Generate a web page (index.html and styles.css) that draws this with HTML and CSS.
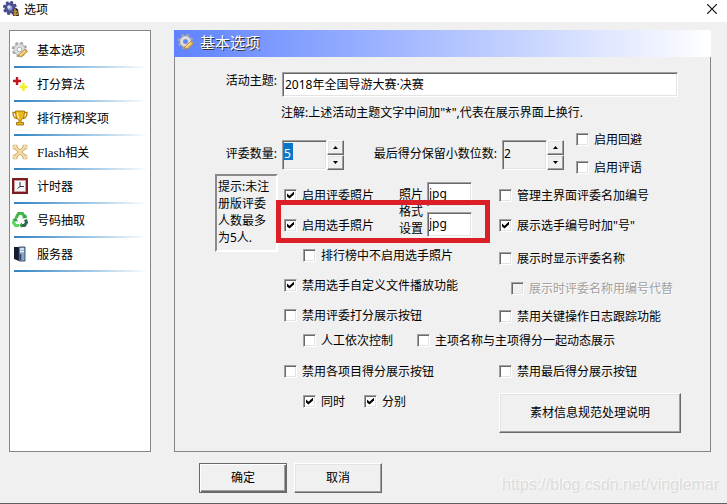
FILE: index.html
```html
<!DOCTYPE html>
<html lang="zh-CN">
  <head>
    <meta charset="utf-8" />
    <title>选项</title>
    <meta name="viewport" content="width=device-width, initial-scale=1" />
    <link rel="stylesheet" href="styles.css">
  </head>
  <body>
    <svg class="defs" width="0" height="0" aria-hidden="true">
      <symbol id="icon-gear" viewBox="0 0 16 16">
        <circle cx="7.5" cy="7.5" r="6.2" fill="none" stroke="#a4a7ad" stroke-width="3" stroke-dasharray="2.6 2.270" />
        <circle cx="7.5" cy="7.5" r="4" fill="none" stroke="#9a9da4" stroke-width="4" />
        <circle cx="7.5" cy="7.5" r="4" fill="none" stroke="#dcdde0" stroke-width="2.8" />
        <path d="M6 13.5l6.500-6 3 2-6.500 5.700z" fill="#f0bf5c" stroke="#a97728" stroke-width=".7" />
        <path d="M8 13l5-4.400" stroke="#ffe6a4" />
      </symbol>
    </svg>

    <header class="titlebar">
      <svg class="icon" viewBox="0 0 16 16">
        <circle cx="7" cy="7" r="5.800" fill="none" stroke="#3c4178" stroke-width="2.400" stroke-dasharray="2.700 1.800" />
        <circle cx="7" cy="7" r="4" fill="#8990c8" stroke="#4a5090" stroke-width="3" />
        <circle cx="6" cy="6" r="1.800" fill="#d8dcf5" />
        <path d="M10 8h5l1 7h-6z" fill="#41321c" />
        <path d="M12 8v7M10.500 10.500h4M10.500 13h4.500" stroke="#c99a3c" stroke-width="1.300" />
      </svg>
      <h1>选项</h1>
      <button class="close" aria-label="关闭">
        <svg viewBox="0 0 10 10"><path d="M0 0L10 10M10 0L0 10" stroke="#111" stroke-width="1.200" fill="none" /></svg>
      </button>
    </header>

    <form class="dialog">
      <div class="columns">
        <nav class="sidebar">
          <a href="#basic">
            <svg class="icon"><use href="#icon-gear" /></svg>
            基本选项
          </a>
          <a href="#score">
            <svg class="icon" viewBox="0 0 16 16">
              <path d="M5 1v8M1 5h8" stroke="#c3161c" stroke-width="2.400" />
              <path d="M11.500 7v8M7.500 11h8" stroke="#f4ee2a" stroke-width="2.400" />
            </svg>
            打分算法
          </a>
          <a href="#rank">
            <svg class="icon" viewBox="0 0 16 16">
              <path d="M4 2.500H1c0 4 1.500 5.500 4 6M12 2.500h3c0 4-1.500 5.500-4 6" fill="none" stroke="#b88408" stroke-width="1.400" />
              <path d="M3.500 1h9c0 5-1 8-3.500 9v2.500h2.500V15h-7v-2.500H7V10C4.500 9 3.500 6 3.500 1z" fill="#edb71b" stroke="#976500" stroke-width=".8" />
              <path d="M5.500 2.500c0 3 .5 5 1.500 6" fill="none" stroke="#fff0a0" stroke-width="1.300" />
            </svg>
            排行榜和奖项
          </a>
          <a href="#flash">
            <svg class="icon" viewBox="0 0 16 16">
              <path d="M3 3l10 10M13 3L3 13" stroke="#c9a55c" stroke-width="3.600" />
              <g fill="#efd193" stroke="#c49e58" stroke-width=".8">
                <circle cx="3" cy="3" r="2.300" /><circle cx="13" cy="3" r="2.300" />
                <circle cx="3" cy="13" r="2.300" /><circle cx="13" cy="13" r="2.300" />
              </g>
              <path d="M3 3l10 10M13 3L3 13" stroke="#f4dca6" stroke-width="2.200" />
              <path d="M0 3h2M3 0v2M14 3h2M13 0v2M0 13h2M3 14v2M14 13h2M13 14v2" stroke="#fff" />
            </svg>
            <span><span class="latin">Flash</span>相关</span>
          </a>
          <a href="#timer">
            <svg class="icon" viewBox="0 0 16 16">
              <rect x="1" y="1" width="14" height="14" fill="#f5f7f8" stroke="#7a1c22" stroke-width="2" />
              <rect x="2.500" y="2.500" width="11" height="11" fill="none" stroke="#c99a9c" />
              <path d="M8 4v4.500h4M8 8.500l-2.500 2" fill="none" stroke="#333c46" />
            </svg>
            计时器
          </a>
          <a href="#draw">
            <svg class="icon" viewBox="0 0 16 16">
              <path d="M4 6l2.500-4.500h4L12.500 5" fill="none" stroke="#45b649" stroke-width="3" />
              <path d="M13.500 7.500l1 3-2 3H9" fill="none" stroke="#2b6c4a" stroke-width="3" />
              <path d="M7 13.500H3.500l-2-3L3 7.500" fill="none" stroke="#5fd35d" stroke-width="3" />
              <path d="M10 6.500l5-.5-1-4zM10 10.500v5.500l-3-2.700zM0 8l4-2.500 2 4z" fill="#36a344" />
            </svg>
            号码抽取
          </a>
          <a href="#server">
            <svg class="icon" viewBox="0 0 16 16">
              <path d="M2 1h5v14l-5-2z" fill="#151c30" />
              <path d="M7 1h6v14H7z" fill="#8ba5c6" stroke="#26364f" stroke-width=".8" />
              <path d="M8 3h4M8 5.500h4" stroke="#e7f2ff" stroke-width="1.300" />
              <path d="M8.500 8v6" stroke="#2e466c" stroke-width="1.600" />
            </svg>
            服务器
          </a>
        </nav>

        <main class="panel">
          <h2><svg class="icon"><use href="#icon-gear" /></svg>基本选项</h2>

          <div class="panel-body">
            <div class="topic">
              <label class="caption" for="topic">活动主题:</label>
              <input class="text sunken" id="topic" type="text" value="2018年全国导游大赛·决赛" />
            </div>
            <p class="note">注解:上述活动主题文字中间加"*",代表在展示界面上换行.</p>

            <div class="counts">
              <label class="caption" for="judges">评委数量:</label>
              <div class="spinner">
                <input class="sunken selected" id="judges" type="text" value="5" />
                <div class="arrows">
                  <button type="button" aria-label="增加"><i class="up"></i></button>
                  <button type="button" aria-label="减少"><i class="down"></i></button>
                </div>
              </div>
              <label class="caption decimals" for="decimals">最后得分保留小数位数:</label>
              <div class="spinner">
                <input class="sunken" id="decimals" type="text" value="2" />
                <div class="arrows">
                  <button type="button" aria-label="增加"><i class="up"></i></button>
                  <button type="button" aria-label="减少"><i class="down"></i></button>
                </div>
              </div>
              <div class="extras">
                <label class="check"><input type="checkbox" />启用回避</label>
                <label class="check"><input type="checkbox" />启用评语</label>
              </div>
            </div>

            <div class="settings">
              <p class="hint">提示:未注册版评委人数最多为5人.</p>

              <div class="left">
                <div class="photos">
                  <div>
                    <label class="check"><input type="checkbox" checked />启用评委照片</label>
                    <label class="check"><input type="checkbox" checked />启用选手照片</label>
                  </div>
                  <p class="format">照片格式设置</p>
                  <div class="formats">
                    <input class="text sunken" type="text" value="jpg" aria-label="评委照片格式" />
                    <input class="text sunken" type="text" value="jpg" aria-label="选手照片格式" />
                  </div>
                  <div class="highlight"></div>
                </div>
                <label class="check sub"><input type="checkbox" />排行榜中不启用选手照片</label>
                <label class="check"><input type="checkbox" checked />禁用选手自定义文件播放功能</label>
                <label class="check"><input type="checkbox" />禁用评委打分展示按钮</label>
                <div class="sub pair modes">
                  <label class="check"><input type="checkbox" />人工依次控制</label>
                  <label class="check"><input type="checkbox" />主项名称与主项得分一起动态展示</label>
                </div>
                <label class="check"><input type="checkbox" />禁用各项目得分展示按钮</label>
                <div class="sub pair">
                  <label class="check"><input type="checkbox" checked />同时</label>
                  <label class="check"><input type="checkbox" checked />分别</label>
                </div>
              </div>

              <div class="right">
                <label class="check"><input type="checkbox" />管理主界面评委名加编号</label>
                <label class="check"><input type="checkbox" checked />展示选手编号时加"号"</label>
                <div class="names">
                  <label class="check"><input type="checkbox" />展示时显示评委名称</label>
                  <label class="check disabled"><input type="checkbox" disabled />展示时评委名称用编号代替</label>
                </div>
                <label class="check log"><input type="checkbox" />禁用关键操作日志跟踪功能</label>
                <label class="check"><input type="checkbox" />禁用最后得分展示按钮</label>
                <button class="btn wide" type="button">素材信息规范处理说明</button>
              </div>
            </div>
          </div>
        </main>
      </div>

      <footer class="actions">
        <button class="btn default" type="button">确定</button>
        <button class="btn" type="button">取消</button>
        <span class="watermark">https://blog.csdn.net/vinglemar</span>
      </footer>
    </form>
  </body>
</html>
```
FILE: styles.css
```css
* {
  box-sizing: border-box;
}
body {
  display: flex;
  flex-direction: column;
  min-height: 100vh;
  margin: 0;
  background: #f0f0f0;
  border-bottom: 1px solid #606060;
  color: #000;
  font: 12px/17px 'Noto Sans', 'Noto Sans CJK SC', sans-serif;
}
h1,
h2,
p {
  margin: 0;
  font-weight: normal;
}
input,
button {
  margin: 0;
  font: inherit;
  color: inherit;
}
.defs {
  position: absolute;
}
.icon {
  flex: none;
  width: 16px;
  height: 16px;
}

/* title bar */
.titlebar {
  display: flex;
  align-items: center;
  gap: 5px;
  height: 22px;
  padding: 0 10px 4px 3px;
  background: #fff;
}
.titlebar h1 {
  flex: 1;
  font-size: 12px;
}
.close {
  display: flex;
  padding: 0;
  border: 0;
  background: none;
}
.close svg {
  width: 10px;
  height: 10px;
}

.dialog {
  padding: 8px 16px 8px 9px;
}
.columns {
  display: flex;
  gap: 23px;
}

/* sidebar */
.sidebar {
  flex: none;
  width: 142px;
  padding: 3px 3px 0 2px;
  background: #fff;
  border: 1px solid #868686;
}
.sidebar a {
  display: flex;
  align-items: center;
  gap: 9px;
  height: 34px;
  padding-bottom: 2px;
  color: #000;
  text-decoration: none;
  background: linear-gradient(to right, #2e83c4, #a9cde8 60%, #fff) 2px 100% / 100% 2px no-repeat;
}
.latin {
  font-family: 'Liberation Serif', serif;
  font-size: 13px;
}

/* panel */
.panel {
  flex: 1;
  border: 1px solid #868686;
  border-top: 0;
}
.panel h2 {
  display: flex;
  align-items: center;
  gap: 6px;
  height: 27px;
  margin: 0 -1px;
  padding: 0 4px 3px;
  background: linear-gradient(to right, #5f83ff, #fff);
  color: #fff;
  font-size: 15px;
  text-shadow: 1px 1px 0 #333;
}
.panel-body {
  padding: 15px 28px 18px 40px;
}
.caption {
  flex: none;
  width: 67px;
  padding-right: 5px;
  text-align: right;
  white-space: nowrap;
}
.sunken {
  border: 1px solid;
  border-color: #a0a0a0 #fff #fff #a0a0a0;
  border-radius: 0;
  outline: 0;
  box-shadow: inset 1px 1px 0 #696969, inset -1px -1px 0 #e3e3e3;
}
.text {
  height: 25px;
  padding: 0 2px 2px;
  background: #fff;
}
.topic {
  display: flex;
  padding-right: 4px;
}
.topic .text {
  flex: 1;
  min-width: 0;
}
.note {
  margin: 7px 0 0 66px;
}

/* spinners */
.counts {
  display: flex;
  height: 55px;
  margin-top: 4px;
}
.counts .caption {
  padding-top: 20px;
}
.counts .decimals {
  width: 158px;
}
.spinner {
  display: flex;
  height: 30px;
  margin-top: 15px;
}
.spinner input {
  width: 45px;
  padding: 0 3px 4px 1px;
  background: #f0f0f0;
}
.spinner .selected {
  background: linear-gradient(#0b74cc, #0b74cc) 1px 2px / 9px 17px no-repeat;
  color: #fff;
}
.arrows {
  display: flex;
  flex-direction: column;
  width: 17px;
}
.arrows button {
  display: flex;
  flex: 1;
  align-items: center;
  justify-content: center;
  padding: 0;
}
.arrows button,
.btn {
  background: #f0f0f0;
  border: 1px solid;
  border-color: #fff #696969 #696969 #fff;
  border-radius: 0;
  box-shadow: inset -1px -1px 0 #a0a0a0, inset 1px 1px 0 #e3e3e3;
}
.up,
.down {
  width: 5px;
  height: 3px;
  background: #000;
  clip-path: polygon(50% 0, 100% 100%, 0 100%);
}
.down {
  clip-path: polygon(0 0, 100% 0, 50% 100%);
}
.extras {
  margin-left: 12px;
}
.extras .check {
  height: 28px;
}

/* check boxes */
.check {
  display: flex;
  align-items: center;
  gap: 5px;
  height: 30px;
  white-space: nowrap;
}
.check input {
  flex: none;
  width: 13px;
  height: 13px;
  appearance: none;
  background: #fff;
  border: 1px solid;
  border-color: #a0a0a0 #fff #fff #a0a0a0;
  box-shadow: inset 1px 1px 0 #696969, inset -1px -1px 0 #e3e3e3;
}
.check input:checked::before {
  content: '';
  display: block;
  width: 7px;
  height: 7px;
  margin: 2px;
  background: #000;
  clip-path: polygon(0 28%, 36% 62%, 100% 0, 100% 42%, 36% 100%, 0 70%);
}
.check.disabled {
  padding-left: 12px;
  color: #a0a0a0;
  text-shadow: 1px 1px 0 #fff;
}
.check.disabled input {
  background: #f0f0f0;
}
.sub {
  padding-left: 19px;
}
.pair {
  display: flex;
  gap: 19px;
}

/* lower settings */
.settings {
  display: flex;
}
.hint {
  flex: none;
  width: 63px;
  height: 78px;
  margin-top: -6px;
  padding: 2px 0 0 1px;
  border: 2px solid;
  border-color: #8a8a8a #fff #fff #8a8a8a;
}
.left {
  flex: none;
  width: 215px;
  padding-left: 6px;
}
.photos {
  position: relative;
  display: flex;
}
.format {
  width: 25px;
  margin: 6px 3px 0 25px;
}
.formats {
  display: flex;
  flex-direction: column;
  gap: 5px;
  padding-top: 2px;
}
.formats .text {
  width: 45px;
  padding: 0 1px 2px;
}
.highlight {
  position: absolute;
  top: 20px;
  left: -8px;
  width: 214px;
  height: 43px;
  border: 5px solid #dc1f27;
  pointer-events: none;
}
.modes {
  gap: 24px;
  margin-bottom: 6px;
}
.modes .check {
  height: 20px;
}
.right {
  flex: 1;
  padding-left: 6px;
}
.names {
  margin-top: 3px;
}
.log {
  height: 26px;
  margin-bottom: 27px;
}

/* buttons */
.btn {
  width: 88px;
  height: 30px;
  padding: 0 0 2px;
}
.wide {
  width: 182px;
  height: 40px;
  margin-top: 7px;
}
.default {
  border-color: #696969;
  box-shadow: inset 1px 1px 0 #fff, inset -1px -1px 0 #696969, inset -2px -2px 0 #a0a0a0;
}
.actions {
  display: flex;
  gap: 7px;
  padding: 11px 0 0 190px;
}
.watermark {
  margin: 13px -8px 0 auto;
  color: #dcdcdc;
  font: 16px/17px 'Liberation Sans', sans-serif;
  text-shadow: -1px -1px 0 #fafafa;
}
```
